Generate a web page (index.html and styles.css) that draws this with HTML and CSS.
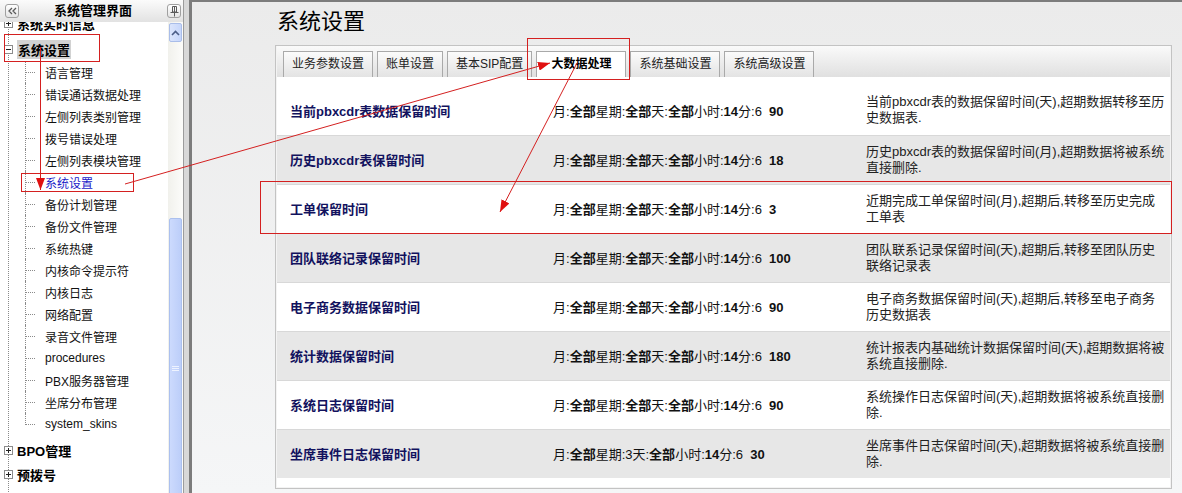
FILE: index.html
```html
<!DOCTYPE html>
<html lang="zh-CN">
<head>
  <meta charset="UTF-8" />
  <meta name="viewport" content="width=device-width, initial-scale=1.0"/>
  <title>系统管理界面</title>
  <link rel="stylesheet" href="styles.css">
</head>
<body>

  <div class="layout">
    <div class="sidebar">
      <div class="sidebar-head">
        <span class="head-btn">
          <svg width="12" height="12" viewBox="0 0 12 12"><path d="M6 3 L3 6 L6 9 M10 3 L7 6 L10 9" fill="none" stroke="#5a5a5a" stroke-width="1.3"/></svg>
        </span>
        <h2>系统管理界面</h2>
        <span class="head-btn">
          <svg width="12" height="12" viewBox="0 0 12 12"><path d="M4.5 1.5h4v5.5h-4z M6.5 1.5v5.5 M2.5 7.5h8 M6.5 7.5v4" fill="none" stroke="#5a5a5a" stroke-width="1"/></svg>
        </span>
      </div>
      <div class="sidebar-body">
        <div class="tree">
          <div class="tree-inner">
            <div class="node first"><span class="toggle plus"></span><span>系统实时信息</span></div>
            <div class="node"><span class="toggle"></span><span class="current">系统设置</span></div>
            <ul class="leaves">
              <li>语言管理</li>
              <li>错误通话数据处理</li>
              <li>左侧列表类别管理</li>
              <li>拨号错误处理</li>
              <li>左侧列表模块管理</li>
              <li class="active">系统设置</li>
              <li>备份计划管理</li>
              <li>备份文件管理</li>
              <li>系统热键</li>
              <li>内核命令提示符</li>
              <li>内核日志</li>
              <li>网络配置</li>
              <li>录音文件管理</li>
              <li>procedures</li>
              <li>PBX服务器管理</li>
              <li>坐席分布管理</li>
              <li>system_skins</li>
            </ul>
            <div class="node gap"><span class="toggle plus"></span><span>BPO管理</span></div>
            <div class="node"><span class="toggle plus"></span><span>预拨号</span></div>
          </div>
        </div>
        <div class="scrollbar">
          <div class="scroll-up">
            <svg width="9" height="6" viewBox="0 0 9 6"><path d="M1 5 L4.5 1.5 L8 5" fill="none" stroke="#4b5d86" stroke-width="1.6"/></svg>
          </div>
          <div class="scroll-thumb"><span class="grip"></span></div>
        </div>
      </div>
    </div>

    <div class="splitter"></div>

    <div class="main">
      <h1>系统设置</h1>
      <div class="panel">
        <div class="tabs">
          <span class="tab">业务参数设置</span>
          <span class="tab">账单设置</span>
          <span class="tab">基本SIP配置</span>
          <span class="tab active">大数据处理</span>
          <span class="tab">系统基础设置</span>
          <span class="tab">系统高级设置</span>
        </div>
        <div class="panel-body">
          <table class="settings">
            <colgroup><col class="c-name"><col class="c-val"><col></colgroup>
            <tr>
              <th>当前pbxcdr表数据保留时间</th>
              <td class="val">月:<b>全部</b>星期:<b>全部</b>天:<b>全部</b>小时:<b>14</b>分:6&nbsp;&nbsp;<b>90</b></td>
              <td class="desc">当前pbxcdr表的数据保留时间(天),超期数据转移至历史数据表.</td>
            </tr>
            <tr>
              <th>历史pbxcdr表保留时间</th>
              <td class="val">月:<b>全部</b>星期:<b>全部</b>天:<b>全部</b>小时:<b>14</b>分:6&nbsp;&nbsp;<b>18</b></td>
              <td class="desc">历史pbxcdr表的数据保留时间(月),超期数据将被系统直接删除.</td>
            </tr>
            <tr>
              <th>工单保留时间</th>
              <td class="val">月:<b>全部</b>星期:<b>全部</b>天:<b>全部</b>小时:<b>14</b>分:6&nbsp;&nbsp;<b>3</b></td>
              <td class="desc">近期完成工单保留时间(月),超期后,转移至历史完成工单表</td>
            </tr>
            <tr>
              <th>团队联络记录保留时间</th>
              <td class="val">月:<b>全部</b>星期:<b>全部</b>天:<b>全部</b>小时:<b>14</b>分:6&nbsp;&nbsp;<b>100</b></td>
              <td class="desc">团队联系记录保留时间(天),超期后,转移至团队历史联络记录表</td>
            </tr>
            <tr>
              <th>电子商务数据保留时间</th>
              <td class="val">月:<b>全部</b>星期:<b>全部</b>天:<b>全部</b>小时:<b>14</b>分:6&nbsp;&nbsp;<b>90</b></td>
              <td class="desc">电子商务数据保留时间(天),超期后,转移至电子商务历史数据表</td>
            </tr>
            <tr>
              <th>统计数据保留时间</th>
              <td class="val">月:<b>全部</b>星期:<b>全部</b>天:<b>全部</b>小时:<b>14</b>分:6&nbsp;&nbsp;<b>180</b></td>
              <td class="desc">统计报表内基础统计数据保留时间(天),超期数据将被系统直接删除.</td>
            </tr>
            <tr>
              <th>系统日志保留时间</th>
              <td class="val">月:<b>全部</b>星期:<b>全部</b>天:<b>全部</b>小时:<b>14</b>分:6&nbsp;&nbsp;<b>90</b></td>
              <td class="desc">系统操作日志保留时间(天),超期数据将被系统直接删除.</td>
            </tr>
            <tr>
              <th>坐席事件日志保留时间</th>
              <td class="val">月:<b>全部</b>星期:3天:<b>全部</b>小时:<b>14</b>分:6&nbsp;&nbsp;<b>30</b></td>
              <td class="desc">坐席事件日志保留时间(天),超期数据将被系统直接删除.</td>
            </tr>
          </table>
        </div>
      </div>
    </div>
  </div>

  <!-- red annotation marks drawn over the screenshot -->
  <svg class="marks" width="1182" height="493" viewBox="0 0 1182 493">
    <defs>
      <marker id="head" markerWidth="12" markerHeight="9" refX="12" refY="4.5" orient="auto" markerUnits="userSpaceOnUse">
        <path d="M0 0 L12 4.5 L0 9 z" fill="#e01010"/>
      </marker>
    </defs>
    <g fill="none" stroke="#d42020" stroke-width="1">
      <rect x="4.5" y="34.5" width="95" height="27"/>
      <rect x="21.5" y="173.5" width="112" height="18"/>
      <rect x="527.5" y="38.5" width="102" height="41"/>
      <rect x="260.5" y="181.5" width="911" height="52"/>
      <line x1="40.5" y1="47" x2="40.5" y2="190" marker-end="url(#head)"/>
      <line x1="125" y1="184" x2="550" y2="63" marker-end="url(#head)"/>
      <line x1="577" y1="63" x2="500" y2="212" marker-end="url(#head)"/>
    </g>
  </svg>

</body>
</html>
```

FILE: styles.css
```css
html, body {
  margin: 0;
  height: 100%;
}
body {
  font-family: "Liberation Sans", "Noto Sans CJK SC", sans-serif;
  font-size: 12px;
  color: #000;
  background: #fff;
  overflow: hidden;
  position: relative;
}
.layout {
  display: flex;
  height: 493px;
}

/* left panel */
.sidebar {
  width: 183px;
  border-right: 1px solid #9c9c9c;
  display: flex;
  flex-direction: column;
  background: #fff;
}
.sidebar-head {
  height: 22px;
  flex: none;
  display: flex;
  align-items: center;
  justify-content: space-between;
  padding: 0 2px 0 5px;
  background: linear-gradient(#fbfbfb, #e2e2e2);
}
.sidebar-head h2 {
  margin: 0;
  font-size: 13px;
  line-height: 16px;
  font-weight: bold;
}
.head-btn {
  width: 14px;
  height: 14px;
  box-sizing: border-box;
  border: 1px solid #a0a0a0;
  border-radius: 3px;
  background: linear-gradient(#ffffff, #e4e4e4);
  display: flex;
  align-items: center;
  justify-content: center;
}
.sidebar-body {
  flex: 1;
  min-height: 0;
  display: flex;
  overflow: hidden;
}
.tree {
  flex: 1;
  overflow: hidden;
}
.tree-inner {
  margin: -12px 0 0 8px;
  padding-bottom: 60px;
  border-left: 1px dotted #8a8a8a;
}
.node {
  display: flex;
  align-items: center;
  height: 24px;
  font-size: 13px;
  font-weight: bold;
}
.node.first {
  height: 27px;
}
.node.gap {
  margin-top: 3px;
}
.toggle {
  width: 9px;
  height: 9px;
  box-sizing: border-box;
  border: 1px solid #8c8c8c;
  margin: 0 4px 0 -5px;
  background: linear-gradient(#222, #222) center / 5px 1px no-repeat, #fff;
}
.toggle.plus {
  background: linear-gradient(#222, #222) center / 5px 1px no-repeat,
              linear-gradient(#222, #222) center / 1px 5px no-repeat, #fff;
}
.current {
  background: #d2d2d2;
  padding: 0 1px;
}
.leaves {
  list-style: none;
  margin: 0 0 0 16px;
  padding: 0;
}
.leaves li {
  height: 22px;
  display: flex;
  align-items: center;
  border-left: 1px dotted #8a8a8a;
  font-size: 12px;
  color: #111;
}
.leaves li::before {
  content: '';
  align-self: flex-start;
  width: 9px;
  height: 11px;
  border-bottom: 1px dotted #8a8a8a;
  margin-right: 10px;
}
.leaves li:last-child {
  border-left-color: transparent;
}
.leaves li:last-child::before {
  border-left: 1px dotted #8a8a8a;
  margin-left: -1px;
}
.leaves li.active {
  color: #1a1ac8;
}
.scrollbar {
  width: 15px;
  flex: none;
  background: linear-gradient(90deg, #f1f1ec, #fcfcfa);
  overflow: hidden;
}
.scroll-up {
  height: 17px;
  margin: 1px 1px 0;
  border: 1px solid #a9bde9;
  border-radius: 2px;
  background: linear-gradient(90deg, #dbe5fc, #c6d6fb);
  display: flex;
  align-items: center;
  justify-content: center;
}
.scroll-thumb {
  height: 298px;
  margin: 176px 1px 0;
  border: 1px solid #abc0ee;
  border-radius: 2px;
  background: linear-gradient(90deg, #ccdafd, #bccef9);
  display: flex;
  align-items: center;
  justify-content: center;
}
.grip {
  width: 7px;
  height: 5px;
  background: repeating-linear-gradient(#eef3ff 0 1px, transparent 1px 2px);
}
.splitter {
  width: 5px;
  flex: none;
  background: #d8d8d8;
}

/* right content */
.main {
  flex: 1;
  border-left: 3px solid #7c7c7c;
  border-top: 2px solid #7c7c7c;
  padding: 4px 10px 0 83px;
  background: linear-gradient(#ebebeb, #f5f6f7);
}
.main h1 {
  margin: 0 0 7px 2px;
  font-size: 22px;
  font-weight: normal;
  line-height: 32px;
}
.panel {
  border: 1px solid #c3c3c3;
  background: #f3f3f3;
  padding: 0 1px 1px;
}
.tabs {
  display: flex;
  align-items: flex-end;
  gap: 4px;
  height: 31px;
  box-sizing: border-box;
  padding: 6px 0 0 6px;
  background: linear-gradient(#fafafa, #e0e0e0);
}
.tab {
  height: 25px;
  line-height: 25px;
  padding: 0 8px;
  border: 1px solid #a9a9a9;
  border-bottom: none;
  background: linear-gradient(#fbfbfb, #e3e3e3);
  color: #222;
  font-size: 12px;
}
.tab.active {
  background: #fff;
  font-weight: bold;
  color: #000;
  padding: 0 14px;
}
.panel-body {
  background: #fff;
  padding: 9px 0;
}
.settings {
  width: 100%;
  border-collapse: collapse;
  table-layout: fixed;
}
.settings .c-name {
  width: 263px;
}
.settings .c-val {
  width: 313px;
}
.settings tr {
  height: 49px;
}
.settings tr:nth-child(even) {
  background: #e7e7e7;
}
.settings tr + tr th,
.settings tr + tr td {
  border-top: 1px solid #d8d8d8;
}
.settings th {
  text-align: left;
  padding: 0 13px;
  font-size: 13px;
  font-weight: bold;
  color: #12125e;
}
.settings .val {
  padding: 0 13px;
  font-size: 13px;
  color: #111;
}
.settings .desc {
  padding: 0 4px 0 13px;
  font-size: 13px;
  line-height: 16px;
  color: #222;
}

.marks {
  position: absolute;
  top: 0;
  left: 0;
  pointer-events: none;
}
```
